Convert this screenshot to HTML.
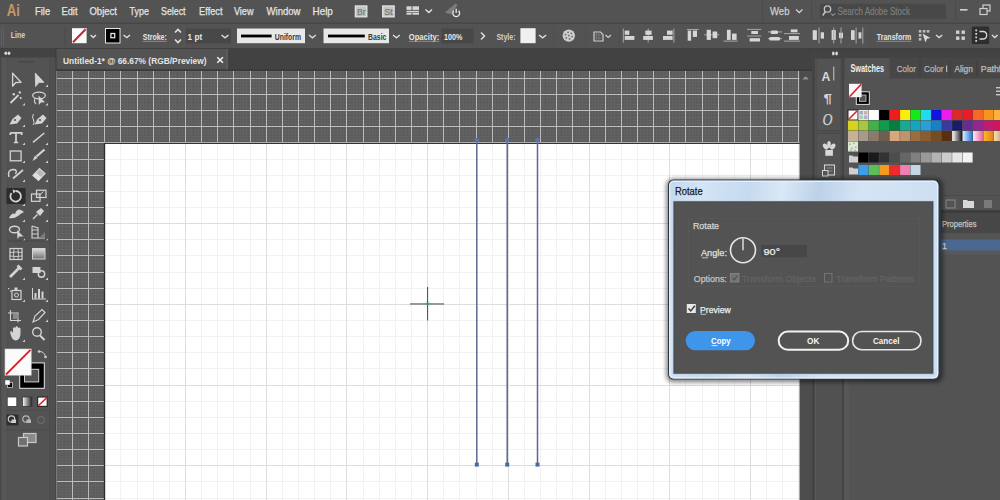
<!DOCTYPE html>
<html><head><meta charset="utf-8"><title>Illustrator</title>
<style>html,body{margin:0;padding:0;width:1000px;height:500px;overflow:hidden;background:#535353;font-family:"Liberation Sans",sans-serif}</style>
</head><body>
<svg width="1000" height="500" viewBox="0 0 1000 500" style="position:absolute;left:0;top:0;display:block" font-family="Liberation Sans, sans-serif"><rect x="0.00" y="0.00" width="1000.00" height="500.00" fill="#535353" />
<rect x="0.00" y="22.50" width="1000.00" height="1.40" fill="#464646" />
<text x="6.80" y="16.00" font-size="16.5" fill="#c4946c" font-weight="bold" textLength="13.20" lengthAdjust="spacingAndGlyphs" >Ai</text>
<text x="35.10" y="15.00" font-size="10.5" fill="#e4e4e4" font-weight="normal" textLength="15.00" lengthAdjust="spacingAndGlyphs" stroke="#e4e4e4" stroke-width="0.25" >File</text>
<text x="61.50" y="15.00" font-size="10.5" fill="#e4e4e4" font-weight="normal" textLength="16.00" lengthAdjust="spacingAndGlyphs" stroke="#e4e4e4" stroke-width="0.25" >Edit</text>
<text x="89.50" y="15.00" font-size="10.5" fill="#e4e4e4" font-weight="normal" textLength="27.40" lengthAdjust="spacingAndGlyphs" stroke="#e4e4e4" stroke-width="0.25" >Object</text>
<text x="129.50" y="15.00" font-size="10.5" fill="#e4e4e4" font-weight="normal" textLength="19.40" lengthAdjust="spacingAndGlyphs" stroke="#e4e4e4" stroke-width="0.25" >Type</text>
<text x="161.10" y="15.00" font-size="10.5" fill="#e4e4e4" font-weight="normal" textLength="24.40" lengthAdjust="spacingAndGlyphs" stroke="#e4e4e4" stroke-width="0.25" >Select</text>
<text x="199.10" y="15.00" font-size="10.5" fill="#e4e4e4" font-weight="normal" textLength="23.40" lengthAdjust="spacingAndGlyphs" stroke="#e4e4e4" stroke-width="0.25" >Effect</text>
<text x="233.90" y="15.00" font-size="10.5" fill="#e4e4e4" font-weight="normal" textLength="19.60" lengthAdjust="spacingAndGlyphs" stroke="#e4e4e4" stroke-width="0.25" >View</text>
<text x="266.50" y="15.00" font-size="10.5" fill="#e4e4e4" font-weight="normal" textLength="34.00" lengthAdjust="spacingAndGlyphs" stroke="#e4e4e4" stroke-width="0.25" >Window</text>
<text x="312.50" y="15.00" font-size="10.5" fill="#e4e4e4" font-weight="normal" textLength="20.40" lengthAdjust="spacingAndGlyphs" stroke="#e4e4e4" stroke-width="0.25" >Help</text>
<rect x="355.40" y="6.00" width="11.40" height="10.80" fill="#c4c4c4" stroke="#dedede" stroke-width="1.4"/>
<text x="357.00" y="14.80" font-size="8.5" fill="#7a7a7a" font-weight="normal" textLength="8.60" lengthAdjust="spacingAndGlyphs" stroke="#7a7a7a" stroke-width="0.25" >Br</text>
<rect x="382.70" y="6.00" width="11.40" height="10.80" fill="#c4c4c4" stroke="#dedede" stroke-width="1.4"/>
<text x="384.30" y="14.80" font-size="8.5" fill="#7a7a7a" font-weight="normal" textLength="8.60" lengthAdjust="spacingAndGlyphs" stroke="#7a7a7a" stroke-width="0.25" >St</text>
<rect x="406.50" y="6.30" width="5.00" height="3.60" fill="#d6d6d6" />
<rect x="412.50" y="6.30" width="6.50" height="3.60" fill="#d6d6d6" />
<rect x="406.50" y="10.80" width="12.50" height="1.60" fill="#d6d6d6" />
<rect x="406.50" y="13.00" width="5.00" height="1.70" fill="#d6d6d6" />
<rect x="412.50" y="13.00" width="6.50" height="1.70" fill="#d6d6d6" />
<path d="M425.5 9.5 L428.8 12.5 L432 9.5" stroke="#e0e0e0" fill="none" stroke-width="1.5" />
<path d="M445 12.5 L455.5 3.5 L457.5 5 L451 14.5 Z" stroke="none" fill="#7c7c7c" stroke-width="1" />
<path d="M453.8 10.8 A3.4 3.4 0 1 0 458.6 10.8" stroke="#e8e8e8" fill="none" stroke-width="1.3" />
<line x1="456.2" y1="8.8" x2="456.2" y2="13" stroke="#e8e8e8" stroke-width="1.3" />
<rect x="762.00" y="2.00" width="1.00" height="19.00" fill="#4a4a4a" />
<rect x="811.00" y="2.00" width="1.00" height="19.00" fill="#4a4a4a" />
<rect x="955.00" y="2.00" width="1.00" height="19.00" fill="#4a4a4a" />
<text x="770.00" y="14.50" font-size="10.5" fill="#cfcfcf" font-weight="normal" textLength="19.50" lengthAdjust="spacingAndGlyphs" stroke="#cfcfcf" stroke-width="0.25" >Web</text>
<path d="M796 9.5 L799.2 12.5 L802.5 9.5" stroke="#d0d0d0" fill="none" stroke-width="1.3" />
<rect x="820.00" y="3.80" width="126.00" height="15.00" fill="#484848" rx="1"/>
<circle cx="827.5" cy="9" r="3.2" stroke="#c4c4c4" stroke-width="1.3" fill="none"/>
<line x1="825.3" y1="11.5" x2="822.8" y2="15.5" stroke="#c4c4c4" stroke-width="1.5" />
<path d="M831 13.5 L833 15.5 L835 13.5" stroke="#c0c0c0" fill="none" stroke-width="1" />
<text x="837.50" y="15.00" font-size="10" fill="#7c7c7c" font-weight="normal" textLength="72.50" lengthAdjust="spacingAndGlyphs" stroke="#7c7c7c" stroke-width="0.25" >Search Adobe Stock</text>
<rect x="960.00" y="9.00" width="7.50" height="1.60" fill="#d0d0d0" />
<rect x="983.00" y="5.00" width="7.00" height="6.00" fill="none" stroke="#cfcfcf" stroke-width="1.2"/>
<rect x="980.00" y="8.50" width="7.00" height="6.00" fill="#535353" stroke="#cfcfcf" stroke-width="1.2"/>
<rect x="0.00" y="48.00" width="1000.00" height="1.00" fill="#404040" />
<rect x="1.00" y="27.00" width="1.00" height="19.00" fill="#5f5f5f" />
<rect x="3.00" y="27.00" width="1.00" height="19.00" fill="#5f5f5f" />
<text x="10.80" y="38.00" font-size="8.6" fill="#d0d0d0" font-weight="bold" textLength="14.40" lengthAdjust="spacingAndGlyphs" >Line</text>
<rect x="64.50" y="27.00" width="1.00" height="19.00" fill="#4a4a4a" />
<rect x="72.00" y="28.20" width="14.60" height="15.00" fill="#fafafa" />
<line x1="73" y1="42.2" x2="85.6" y2="29.2" stroke="#c0283a" stroke-width="2" />
<path d="M90.6 35 L93.3 37.6 L96 35" stroke="#dddddd" fill="none" stroke-width="1.4" />
<rect x="105.50" y="28.50" width="14.50" height="14.50" fill="#000000" stroke="#e6e6e6" stroke-width="1"/>
<rect x="110.90" y="33.50" width="3.80" height="4.20" fill="none" stroke="#e0e0e0" stroke-width="1.3"/>
<path d="M123.5 35 L126.8 37.6 L130 35" stroke="#dddddd" fill="none" stroke-width="1.4" />
<text x="142.80" y="39.50" font-size="8.8" fill="#e6e6e6" font-weight="bold" textLength="24.00" lengthAdjust="spacingAndGlyphs" >Stroke:</text>
<line x1="142.8" y1="41.3" x2="166.8" y2="41.3" stroke="#9a9a9a" stroke-width="0.8" />
<path d="M175 32.5 L178 29.5 L181 32.5" stroke="#e0e0e0" fill="none" stroke-width="1.6" />
<path d="M175 39.5 L178 42.5 L181 39.5" stroke="#e0e0e0" fill="none" stroke-width="1.6" />
<rect x="186.00" y="28.50" width="45.00" height="15.00" fill="#484848" />
<text x="187.60" y="39.50" font-size="8.8" fill="#e6e6e6" font-weight="bold" textLength="14.50" lengthAdjust="spacingAndGlyphs" >1 pt</text>
<path d="M221.5 35 L225 37.8 L228.5 35" stroke="#dddddd" fill="none" stroke-width="1.4" />
<rect x="237.00" y="28.50" width="68.00" height="14.70" fill="#e8e8e8" />
<rect x="241.00" y="34.60" width="30.60" height="2.80" fill="#000000" />
<text x="274.80" y="39.50" font-size="8.8" fill="#3a3a3a" font-weight="bold" textLength="26.20" lengthAdjust="spacingAndGlyphs" >Uniform</text>
<path d="M309 35 L312.4 37.8 L315.8 35" stroke="#dddddd" fill="none" stroke-width="1.4" />
<rect x="323.50" y="28.50" width="65.50" height="14.70" fill="#e8e8e8" />
<rect x="328.00" y="34.60" width="36.80" height="2.80" fill="#000000" />
<text x="368.00" y="39.50" font-size="8.8" fill="#3a3a3a" font-weight="bold" textLength="18.40" lengthAdjust="spacingAndGlyphs" >Basic</text>
<path d="M393 35 L396.4 37.8 L399.8 35" stroke="#dddddd" fill="none" stroke-width="1.4" />
<text x="408.80" y="39.50" font-size="8.8" fill="#e6e6e6" font-weight="bold" textLength="30.40" lengthAdjust="spacingAndGlyphs" >Opacity:</text>
<line x1="408.8" y1="41.3" x2="439.2" y2="41.3" stroke="#9a9a9a" stroke-width="0.8" />
<rect x="441.60" y="28.50" width="32.00" height="15.00" fill="#484848" />
<text x="444.00" y="39.50" font-size="8.8" fill="#e6e6e6" font-weight="bold" textLength="18.40" lengthAdjust="spacingAndGlyphs" >100%</text>
<path d="M481 32.5 L484.5 36 L481 39.5" stroke="#dddddd" fill="none" stroke-width="1.5" />
<text x="496.40" y="39.50" font-size="8.8" fill="#d0d0d0" font-weight="bold" textLength="19.20" lengthAdjust="spacingAndGlyphs" >Style:</text>
<rect x="520.40" y="28.20" width="15.20" height="15.00" fill="#f0f0f0" />
<path d="M539 35 L542.6 37.8 L546.2 35" stroke="#dddddd" fill="none" stroke-width="1.4" />
<rect x="553.00" y="26.00" width="1.00" height="21.00" fill="#4e4e4e" />
<circle cx="568.8" cy="35.6" r="6.2" fill="#cdcdcd"/>
<circle cx="572.05" cy="36.60" r="0.9" fill="#6a6a6a"/>
<circle cx="569.55" cy="38.92" r="0.9" fill="#6a6a6a"/>
<circle cx="566.31" cy="37.91" r="0.9" fill="#6a6a6a"/>
<circle cx="565.55" cy="34.60" r="0.9" fill="#6a6a6a"/>
<circle cx="568.05" cy="32.28" r="0.9" fill="#6a6a6a"/>
<circle cx="571.29" cy="33.29" r="0.9" fill="#6a6a6a"/>
<circle cx="568.8" cy="35.6" r="0.9" fill="#6a6a6a"/>
<rect x="585.00" y="26.00" width="1.00" height="21.00" fill="#4e4e4e" />
<path d="M594 32 H600.5 L603 34.5 V41 H594 Z" stroke="#d0d0d0" fill="none" stroke-width="1.2" />
<path d="M596.5 32 V41 M599 32 V41 M594 35 H603 M594 38 H603" stroke="#8a8a8a" fill="none" stroke-width="0.6" />
<path d="M605.5 35 L608.2 37.5 L611 35" stroke="#d0d0d0" fill="none" stroke-width="1.2" />
<rect x="619.00" y="26.00" width="1.00" height="21.00" fill="#4e4e4e" />
<rect x="622.80" y="28.50" width="1.00" height="14.00" fill="#a8a8a8" />
<rect x="624.70" y="30.60" width="4.60" height="4.20" fill="#d6d6d6" />
<rect x="624.70" y="36.00" width="9.70" height="3.90" fill="#d6d6d6" />
<rect x="647.70" y="28.50" width="1.00" height="14.00" fill="#a8a8a8" />
<rect x="645.30" y="30.60" width="6.30" height="4.20" fill="#d6d6d6" />
<rect x="643.20" y="36.00" width="9.70" height="3.90" fill="#d6d6d6" />
<rect x="673.40" y="28.50" width="1.00" height="14.00" fill="#a8a8a8" />
<rect x="667.00" y="30.60" width="5.60" height="4.20" fill="#d6d6d6" />
<rect x="663.00" y="36.00" width="9.60" height="3.90" fill="#d6d6d6" />
<rect x="687.00" y="29.00" width="11.70" height="1.00" fill="#a8a8a8" />
<rect x="687.70" y="30.60" width="3.40" height="10.10" fill="#d6d6d6" />
<rect x="692.80" y="30.60" width="4.20" height="6.30" fill="#d6d6d6" />
<rect x="704.20" y="34.30" width="15.10" height="1.00" fill="#a8a8a8" />
<rect x="706.70" y="29.80" width="4.20" height="10.10" fill="#d6d6d6" />
<rect x="712.60" y="31.50" width="4.60" height="6.70" fill="#d6d6d6" />
<rect x="723.50" y="40.60" width="14.30" height="1.00" fill="#a8a8a8" />
<rect x="726.90" y="29.80" width="3.80" height="10.10" fill="#d6d6d6" />
<rect x="732.00" y="33.60" width="4.60" height="6.30" fill="#d6d6d6" />
<rect x="747.00" y="28.90" width="14.30" height="1.00" fill="#a8a8a8" />
<rect x="747.00" y="35.50" width="14.30" height="1.00" fill="#a8a8a8" />
<rect x="751.30" y="31.00" width="6.70" height="3.00" fill="#d6d6d6" />
<rect x="749.60" y="38.20" width="10.40" height="3.30" fill="#d6d6d6" />
<rect x="768.00" y="31.40" width="14.00" height="1.00" fill="#a8a8a8" />
<rect x="768.00" y="38.10" width="14.00" height="1.00" fill="#a8a8a8" />
<rect x="770.60" y="30.40" width="7.50" height="3.50" fill="#d6d6d6" rx="1.5"/>
<rect x="769.20" y="37.00" width="10.90" height="3.50" fill="#d6d6d6" rx="1.5"/>
<rect x="790.80" y="29.40" width="6.70" height="2.90" fill="#d6d6d6" />
<rect x="784.00" y="33.10" width="16.00" height="1.00" fill="#a8a8a8" />
<rect x="789.00" y="36.00" width="9.80" height="3.90" fill="#d6d6d6" />
<rect x="784.00" y="40.60" width="16.00" height="1.00" fill="#a8a8a8" />
<rect x="812.70" y="30.20" width="4.20" height="9.70" fill="#d6d6d6" />
<rect x="818.50" y="27.50" width="1.00" height="16.00" fill="#a8a8a8" />
<rect x="820.70" y="32.30" width="3.30" height="6.30" fill="#d6d6d6" />
<rect x="831.60" y="30.00" width="4.20" height="9.90" fill="#d6d6d6" />
<rect x="833.20" y="27.50" width="1.00" height="16.00" fill="#a8a8a8" />
<rect x="839.00" y="32.70" width="4.00" height="5.50" fill="#d6d6d6" />
<rect x="840.50" y="27.50" width="1.00" height="16.00" fill="#a8a8a8" />
<rect x="851.00" y="30.20" width="3.70" height="9.70" fill="#d6d6d6" />
<rect x="855.60" y="27.50" width="1.00" height="16.00" fill="#a8a8a8" />
<rect x="858.50" y="32.30" width="2.90" height="6.30" fill="#d6d6d6" />
<rect x="862.30" y="27.50" width="1.00" height="16.00" fill="#a8a8a8" />
<rect x="870.00" y="26.00" width="1.00" height="21.00" fill="#4e4e4e" />
<text x="876.80" y="39.50" font-size="8.8" fill="#e6e6e6" font-weight="bold" textLength="34.40" lengthAdjust="spacingAndGlyphs" >Transform</text>
<line x1="876.8" y1="41.3" x2="911.2" y2="41.3" stroke="#9a9a9a" stroke-width="0.8" />
<rect x="918.80" y="30.00" width="2.60" height="2.60" fill="#bdbdbd" />
<rect x="918.80" y="34.00" width="2.60" height="2.60" fill="#bdbdbd" />
<rect x="918.80" y="38.00" width="2.60" height="2.60" fill="#bdbdbd" />
<rect x="922.80" y="30.00" width="2.60" height="2.60" fill="#bdbdbd" />
<rect x="926.80" y="30.00" width="2.60" height="2.60" fill="#bdbdbd" />
<path d="M922.5 33.5 L930.5 38 L927 38.8 L925.5 42.5 Z" stroke="none" fill="#d8d8d8" stroke-width="1" />
<path d="M936 35 L939.1 37.6 L942.2 35" stroke="#dddddd" fill="none" stroke-width="1.3" />
<rect x="956.00" y="30.50" width="3.40" height="3.40" fill="#cfcfcf" />
<rect x="961.50" y="30.50" width="3.40" height="3.40" fill="#cfcfcf" />
<rect x="956.00" y="36.50" width="3.40" height="3.40" fill="#cfcfcf" />
<rect x="961.50" y="36.50" width="3.40" height="3.40" fill="#cfcfcf" />
<rect x="971.80" y="26.60" width="17.40" height="17.40" fill="#2e2e2e" rx="1.5"/>
<rect x="975.30" y="29.50" width="1.80" height="1.80" fill="#cfcfcf" />
<rect x="975.30" y="33.00" width="1.80" height="1.80" fill="#cfcfcf" />
<rect x="975.30" y="36.50" width="1.80" height="1.80" fill="#cfcfcf" />
<rect x="975.30" y="40.00" width="1.80" height="1.80" fill="#cfcfcf" />
<path d="M979.5 31.5 H983.5 A3.8 3.8 0 0 1 983.5 39 H979.5" stroke="#d8d8d8" fill="none" stroke-width="1.3" />
<path d="M992 35 L994.8 37.6 L997.6 35" stroke="#dddddd" fill="none" stroke-width="1.3" />
<rect x="56.00" y="49.00" width="756.00" height="22.00" fill="#424242" />
<rect x="56.00" y="49.00" width="172.00" height="20.50" fill="#535353" />
<rect x="226.00" y="49.00" width="2.00" height="20.50" fill="#5a5a5a" />
<text x="63.00" y="63.60" font-size="9.3" fill="#e4e4e4" font-weight="bold" textLength="143.50" lengthAdjust="spacingAndGlyphs" >Untitled-1* @ 66.67% (RGB/Preview)</text>
<path d="M217.3 57.2 L223 62.8 M223 57.2 L217.3 62.8" stroke="#f0f0f0" fill="none" stroke-width="1.6" />
<rect x="56.00" y="71.00" width="744.00" height="429.00" fill="#5c5c5c" />
<path d="M59.50 71V500M62.50 71V500M66.50 71V500M69.50 71V500M75.50 71V500M78.50 71V500M82.50 71V500M85.50 71V500M91.50 71V500M95.50 71V500M98.50 71V500M101.50 71V500M108.50 71V500M111.50 71V500M114.50 71V500M117.50 71V500M124.50 71V500M127.50 71V500M130.50 71V500M133.50 71V500M140.50 71V500M143.50 71V500M146.50 71V500M150.50 71V500M156.50 71V500M159.50 71V500M162.50 71V500M166.50 71V500M172.50 71V500M175.50 71V500M179.50 71V500M182.50 71V500M188.50 71V500M191.50 71V500M195.50 71V500M198.50 71V500M204.50 71V500M208.50 71V500M211.50 71V500M214.50 71V500M221.50 71V500M224.50 71V500M227.50 71V500M230.50 71V500M237.50 71V500M240.50 71V500M243.50 71V500M246.50 71V500M253.50 71V500M256.50 71V500M259.50 71V500M262.50 71V500M269.50 71V500M272.50 71V500M275.50 71V500M279.50 71V500M285.50 71V500M288.50 71V500M292.50 71V500M295.50 71V500M301.50 71V500M304.50 71V500M308.50 71V500M311.50 71V500M317.50 71V500M321.50 71V500M324.50 71V500M327.50 71V500M334.50 71V500M337.50 71V500M340.50 71V500M343.50 71V500M350.50 71V500M353.50 71V500M356.50 71V500M359.50 71V500M366.50 71V500M369.50 71V500M372.50 71V500M375.50 71V500M382.50 71V500M385.50 71V500M388.50 71V500M392.50 71V500M398.50 71V500M401.50 71V500M405.50 71V500M408.50 71V500M414.50 71V500M417.50 71V500M421.50 71V500M424.50 71V500M430.50 71V500M434.50 71V500M437.50 71V500M440.50 71V500M446.50 71V500M450.50 71V500M453.50 71V500M456.50 71V500M463.50 71V500M466.50 71V500M469.50 71V500M472.50 71V500M479.50 71V500M482.50 71V500M485.50 71V500M488.50 71V500M495.50 71V500M498.50 71V500M501.50 71V500M505.50 71V500M511.50 71V500M514.50 71V500M518.50 71V500M521.50 71V500M527.50 71V500M530.50 71V500M534.50 71V500M537.50 71V500M543.50 71V500M547.50 71V500M550.50 71V500M553.50 71V500M559.50 71V500M563.50 71V500M566.50 71V500M569.50 71V500M576.50 71V500M579.50 71V500M582.50 71V500M585.50 71V500M592.50 71V500M595.50 71V500M598.50 71V500M601.50 71V500M608.50 71V500M611.50 71V500M614.50 71V500M618.50 71V500M624.50 71V500M627.50 71V500M630.50 71V500M634.50 71V500M640.50 71V500M643.50 71V500M647.50 71V500M650.50 71V500M656.50 71V500M660.50 71V500M663.50 71V500M666.50 71V500M672.50 71V500M676.50 71V500M679.50 71V500M682.50 71V500M689.50 71V500M692.50 71V500M695.50 71V500M698.50 71V500M705.50 71V500M708.50 71V500M711.50 71V500M714.50 71V500M721.50 71V500M724.50 71V500M727.50 71V500M731.50 71V500M737.50 71V500M740.50 71V500M743.50 71V500M747.50 71V500M753.50 71V500M756.50 71V500M760.50 71V500M763.50 71V500M769.50 71V500M773.50 71V500M776.50 71V500M779.50 71V500M785.50 71V500M789.50 71V500M792.50 71V500M795.50 71V500M56 71.50H800M56 75.50H800M56 81.50H800M56 84.50H800M56 88.50H800M56 91.50H800M56 97.50H800M56 100.50H800M56 104.50H800M56 107.50H800M56 113.50H800M56 117.50H800M56 120.50H800M56 123.50H800M56 130.50H800M56 133.50H800M56 136.50H800M56 139.50H800M56 146.50H800M56 149.50H800M56 152.50H800M56 155.50H800M56 162.50H800M56 165.50H800M56 168.50H800M56 172.50H800M56 178.50H800M56 181.50H800M56 184.50H800M56 188.50H800M56 194.50H800M56 197.50H800M56 201.50H800M56 204.50H800M56 210.50H800M56 213.50H800M56 217.50H800M56 220.50H800M56 226.50H800M56 230.50H800M56 233.50H800M56 236.50H800M56 243.50H800M56 246.50H800M56 249.50H800M56 252.50H800M56 259.50H800M56 262.50H800M56 265.50H800M56 268.50H800M56 275.50H800M56 278.50H800M56 281.50H800M56 284.50H800M56 291.50H800M56 294.50H800M56 297.50H800M56 301.50H800M56 307.50H800M56 310.50H800M56 314.50H800M56 317.50H800M56 323.50H800M56 326.50H800M56 330.50H800M56 333.50H800M56 339.50H800M56 343.50H800M56 346.50H800M56 349.50H800M56 356.50H800M56 359.50H800M56 362.50H800M56 365.50H800M56 372.50H800M56 375.50H800M56 378.50H800M56 381.50H800M56 388.50H800M56 391.50H800M56 394.50H800M56 397.50H800M56 404.50H800M56 407.50H800M56 410.50H800M56 414.50H800M56 420.50H800M56 423.50H800M56 427.50H800M56 430.50H800M56 436.50H800M56 439.50H800M56 443.50H800M56 446.50H800M56 452.50H800M56 456.50H800M56 459.50H800M56 462.50H800M56 468.50H800M56 472.50H800M56 475.50H800M56 478.50H800M56 485.50H800M56 488.50H800M56 491.50H800M56 494.50H800" stroke="#626262" fill="none" stroke-width="1" />
<path d="M56.50 71V500M72.50 71V500M88.50 71V500M104.50 71V500M120.50 71V500M137.50 71V500M153.50 71V500M169.50 71V500M185.50 71V500M201.50 71V500M217.50 71V500M233.50 71V500M250.50 71V500M266.50 71V500M282.50 71V500M298.50 71V500M314.50 71V500M330.50 71V500M346.50 71V500M363.50 71V500M379.50 71V500M395.50 71V500M411.50 71V500M427.50 71V500M443.50 71V500M459.50 71V500M476.50 71V500M492.50 71V500M508.50 71V500M524.50 71V500M540.50 71V500M556.50 71V500M572.50 71V500M589.50 71V500M605.50 71V500M621.50 71V500M637.50 71V500M653.50 71V500M669.50 71V500M685.50 71V500M702.50 71V500M718.50 71V500M734.50 71V500M750.50 71V500M766.50 71V500M782.50 71V500M798.50 71V500M56 78.50H800M56 94.50H800M56 110.50H800M56 126.50H800M56 142.50H800M56 159.50H800M56 175.50H800M56 191.50H800M56 207.50H800M56 223.50H800M56 239.50H800M56 255.50H800M56 272.50H800M56 288.50H800M56 304.50H800M56 320.50H800M56 336.50H800M56 352.50H800M56 368.50H800M56 385.50H800M56 401.50H800M56 417.50H800M56 433.50H800M56 449.50H800M56 465.50H800M56 481.50H800M56 498.50H800" stroke="#bcbcbc" fill="none" stroke-width="1" />
<rect x="104.80" y="143.40" width="695.20" height="356.60" fill="#ffffff" />
<path d="M120.50 143.4V500M137.50 143.4V500M153.50 143.4V500M169.50 143.4V500M201.50 143.4V500M217.50 143.4V500M233.50 143.4V500M250.50 143.4V500M282.50 143.4V500M298.50 143.4V500M314.50 143.4V500M330.50 143.4V500M363.50 143.4V500M379.50 143.4V500M395.50 143.4V500M411.50 143.4V500M443.50 143.4V500M459.50 143.4V500M476.50 143.4V500M492.50 143.4V500M524.50 143.4V500M540.50 143.4V500M556.50 143.4V500M572.50 143.4V500M605.50 143.4V500M621.50 143.4V500M637.50 143.4V500M653.50 143.4V500M685.50 143.4V500M702.50 143.4V500M718.50 143.4V500M734.50 143.4V500M766.50 143.4V500M782.50 143.4V500M798.50 143.4V500M104.8 159.50H800M104.8 175.50H800M104.8 191.50H800M104.8 207.50H800M104.8 239.50H800M104.8 255.50H800M104.8 272.50H800M104.8 288.50H800M104.8 320.50H800M104.8 336.50H800M104.8 352.50H800M104.8 368.50H800M104.8 401.50H800M104.8 417.50H800M104.8 433.50H800M104.8 449.50H800M104.8 481.50H800M104.8 498.50H800" stroke="#f2f2f2" fill="none" stroke-width="1" />
<path d="M185.50 143.4V500M266.50 143.4V500M346.50 143.4V500M427.50 143.4V500M508.50 143.4V500M589.50 143.4V500M669.50 143.4V500M750.50 143.4V500M104.8 223.50H800M104.8 304.50H800M104.8 385.50H800M104.8 465.50H800" stroke="#dddddd" fill="none" stroke-width="1" />
<rect x="103.90" y="142.90" width="1.30" height="357.10" fill="#2e2e2e" />
<rect x="103.90" y="142.90" width="696.10" height="1.10" fill="#343434" />
<rect x="56.00" y="69.60" width="756.00" height="1.40" fill="#393939" />
<rect x="799.50" y="71.00" width="12.50" height="429.00" fill="#4d4d4d" />
<path d="M802.6 79.6 Q805.6 73.2 808.6 79.6 Z" stroke="none" fill="#8e8e8e" stroke-width="1" />
<rect x="476.05" y="140.00" width="1.50" height="324.60" fill="#5d6890" />
<rect x="474.80" y="138.00" width="4.00" height="4.00" fill="#5a72b0" />
<rect x="474.80" y="462.60" width="4.00" height="4.00" fill="#4a6aa0" />
<rect x="506.45" y="140.00" width="1.50" height="324.60" fill="#5d6890" />
<rect x="505.20" y="138.00" width="4.00" height="4.00" fill="#5a72b0" />
<rect x="505.20" y="462.60" width="4.00" height="4.00" fill="#4a6aa0" />
<rect x="536.75" y="140.00" width="1.50" height="324.60" fill="#5d6890" />
<rect x="535.50" y="138.00" width="4.00" height="4.00" fill="#5a72b0" />
<rect x="535.50" y="462.60" width="4.00" height="4.00" fill="#4a6aa0" />
<defs><filter id="sh2" x="-200%" y="-200%" width="500%" height="500%"><feGaussianBlur stdDeviation="1"/></filter></defs>
<rect x="426.00" y="302.00" width="3.00" height="3.00" fill="#7fd8d4" filter="url(#sh2)"/>
<rect x="410.00" y="303.40" width="34.00" height="1.10" fill="#555555" />
<rect x="427.00" y="287.00" width="1.10" height="33.50" fill="#555555" />
<rect x="426.60" y="303.20" width="2.00" height="1.80" fill="#2aa8a0" />
<rect x="0.00" y="48.50" width="56.00" height="9.00" fill="#434343" />
<ellipse cx="5.8" cy="53.3" rx="1.4" ry="1.8" fill="#d8d8d8"/><ellipse cx="9" cy="53.3" rx="1.4" ry="1.8" fill="#d8d8d8"/>
<rect x="0.00" y="57.50" width="1.50" height="442.50" fill="#484848" />
<rect x="1.50" y="57.50" width="5.80" height="442.50" fill="#565656" />
<rect x="7.30" y="57.50" width="0.80" height="442.50" fill="#4e4e4e" />
<rect x="49.00" y="57.50" width="1.00" height="442.50" fill="#4e4e4e" />
<rect x="50.00" y="57.50" width="5.50" height="442.50" fill="#4f4f4f" />
<rect x="55.50" y="49.00" width="1.00" height="451.00" fill="#3a3a3a" />
<rect x="18.00" y="61.00" width="16.00" height="1.50" fill="#484848" />
<path d="M12.6 73.2 L12.6 86.2 L15.8 82.5 L21 82.3 Z" stroke="#d4d4d4" fill="none" stroke-width="1.3" stroke-linejoin="round"/>
<path d="M35.3 73 L35.6 86.5 L38.8 82.6 L44 82.3 Z" stroke="#d4d4d4" fill="#d4d4d4" stroke-width="0.8" />
<path d="M48 87 L48 84.4 L45.4 87 Z" stroke="none" fill="#cfcfcf" stroke-width="1" />
<line x1="10.5" y1="103" x2="18.5" y2="95" stroke="#d4d4d4" stroke-width="1.8" />
<circle cx="13.8" cy="94.3" r="1.2" fill="#d4d4d4"/><circle cx="19.8" cy="92.4" r="1.2" fill="#d4d4d4"/><circle cx="20.7" cy="98" r="1" fill="#d4d4d4"/>
<ellipse cx="39" cy="95.5" rx="6.3" ry="3.3" stroke="#d4d4d4" stroke-width="1.3" fill="none"/>
<path d="M35.5 98 Q33 101 36 104" stroke="#d4d4d4" fill="none" stroke-width="1.1" />
<path d="M38.5 95.5 L38.8 105 L41 102.5 L45 102.3 Z" stroke="none" fill="#d4d4d4" stroke-width="1" />
<path d="M25 105.5 L25 102.9 L22.4 105.5 Z" stroke="none" fill="#cfcfcf" stroke-width="1" />
<path d="M48 105.5 L48 102.9 L45.4 105.5 Z" stroke="none" fill="#cfcfcf" stroke-width="1" />
<path d="M9.5 124.5 L12.5 119 L18 114.5 L21.5 118 L17 123.5 Z" stroke="none" fill="#d4d4d4" stroke-width="1" />
<circle cx="15" cy="120" r="1.1" fill="#535353"/>
<path d="M34.5 124.5 L37.5 119 L43 114.5 L46.5 118 L42 123.5 Z" stroke="none" fill="#d4d4d4" stroke-width="1" />
<circle cx="40" cy="120" r="1.1" fill="#535353"/>
<path d="M33.5 114 Q31.5 117 33.5 120 Q35 123 33 125" stroke="#d4d4d4" fill="none" stroke-width="1" />
<path d="M25 127 L25 124.4 L22.4 127 Z" stroke="none" fill="#cfcfcf" stroke-width="1" />
<path d="M48 127 L48 124.4 L45.4 127 Z" stroke="none" fill="#cfcfcf" stroke-width="1" />
<path d="M10.3 132.8 H21.7 V135 M10.3 132.8 V135 M16 132.8 V142.5 M13.8 142.5 H18.2" stroke="#d4d4d4" fill="none" stroke-width="1.7" />
<line x1="33" y1="142.3" x2="44.3" y2="133" stroke="#d4d4d4" stroke-width="1.6" />
<path d="M25 145 L25 142.4 L22.4 145 Z" stroke="none" fill="#cfcfcf" stroke-width="1" />
<path d="M48 145 L48 142.4 L45.4 145 Z" stroke="none" fill="#cfcfcf" stroke-width="1" />
<rect x="10.30" y="151.00" width="10.80" height="9.80" fill="#5a5a5a" stroke="#d4d4d4" stroke-width="1.3"/>
<path d="M32.5 161 L35 155.5 L37.5 158 Z" stroke="none" fill="#d4d4d4" stroke-width="1" />
<line x1="36.5" y1="156.5" x2="44.5" y2="149.5" stroke="#d4d4d4" stroke-width="2.2" />
<path d="M25 163 L25 160.4 L22.4 163 Z" stroke="none" fill="#cfcfcf" stroke-width="1" />
<path d="M48 163 L48 160.4 L45.4 163 Z" stroke="none" fill="#cfcfcf" stroke-width="1" />
<path d="M9 177 Q7 170 13 169.5 Q18 169.5 15.5 174" stroke="#d4d4d4" fill="none" stroke-width="1.4" />
<line x1="13" y1="178.5" x2="23" y2="170" stroke="#d4d4d4" stroke-width="1.7" />
<path d="M33 175.5 L39.5 168.5 L45 173.5 L38.5 180.5 Z" stroke="#d4d4d4" fill="#b8b8b8" stroke-width="1.2" />
<path d="M33 175.5 L36 172.5 L41.5 177.5 L38.5 180.5 Z" stroke="none" fill="#e0e0e0" stroke-width="1" />
<path d="M25 182 L25 179.4 L22.4 182 Z" stroke="none" fill="#cfcfcf" stroke-width="1" />
<path d="M48 182 L48 179.4 L45.4 182 Z" stroke="none" fill="#cfcfcf" stroke-width="1" />
<rect x="6.40" y="188.00" width="19.20" height="16.00" fill="#2c2c2c" rx="1"/>
<path d="M11.5 193 A5.3 5.3 0 1 0 16 191" stroke="#d4d4d4" fill="none" stroke-width="1.8" />
<path d="M12.5 189.5 L16.5 190.8 L13.5 193.5 Z" stroke="none" fill="#d4d4d4" stroke-width="1" />
<rect x="31.50" y="194.00" width="8.50" height="7.30" fill="none" stroke="#d4d4d4" stroke-width="1.2"/>
<rect x="36.50" y="190.20" width="9.50" height="7.30" fill="none" stroke="#d4d4d4" stroke-width="1.2"/>
<line x1="38.5" y1="196" x2="43.5" y2="191.5" stroke="#d4d4d4" stroke-width="1" />
<path d="M25 206 L25 203.4 L22.4 206 Z" stroke="none" fill="#cfcfcf" stroke-width="1" />
<path d="M48 206 L48 203.4 L45.4 206 Z" stroke="none" fill="#cfcfcf" stroke-width="1" />
<path d="M9 218 Q12 212 15 214 Q17 208 21 210 L24 212 Q20 214 18 216 Q14 219 9 218 Z" stroke="none" fill="#d4d4d4" stroke-width="1" />
<path d="M33 219 L37.5 214.5" stroke="#d4d4d4" fill="none" stroke-width="1.5" />
<path d="M36 212 L41 208 L44 211 L40 216 Z" stroke="none" fill="#d4d4d4" stroke-width="1" />
<path d="M25 222 L25 219.4 L22.4 222 Z" stroke="none" fill="#cfcfcf" stroke-width="1" />
<path d="M48 222 L48 219.4 L45.4 222 Z" stroke="none" fill="#cfcfcf" stroke-width="1" />
<ellipse cx="14.5" cy="229.5" rx="5" ry="3.3" stroke="#d4d4d4" stroke-width="1.4" fill="none"/>
<path d="M17 230 L17.5 239 L19.5 236.5 L23.5 236.5 Z" stroke="none" fill="#d4d4d4" stroke-width="1" />
<path d="M32 226 V238 H45 M32 226 L38 228 V238 M32 230 H38 M32 234 H38" stroke="#d4d4d4" fill="none" stroke-width="1.1" />
<path d="M39 238 L45 232 V238 Z" stroke="none" fill="#7a7a7a" stroke-width="1" />
<path d="M25 241 L25 238.4 L22.4 241 Z" stroke="none" fill="#cfcfcf" stroke-width="1" />
<path d="M48 241 L48 238.4 L45.4 241 Z" stroke="none" fill="#cfcfcf" stroke-width="1" />
<rect x="8.00" y="240.30" width="42.00" height="1.30" fill="#4a4a4a" />
<rect x="10.00" y="248.50" width="12.00" height="11.00" fill="none" stroke="#d4d4d4" stroke-width="1.2"/>
<path d="M14 248.5 Q13 254 14 259.5 M18 248.5 Q19 254 18 259.5 M10 252.5 Q16 251.5 22 252.5 M10 256 Q16 257 22 256" stroke="#d4d4d4" fill="none" stroke-width="0.9" />
<defs><linearGradient id="tg" x1="0" x2="0" y1="0" y2="1"><stop offset="0" stop-color="#e0e0e0"/><stop offset="1" stop-color="#707070"/></linearGradient><linearGradient id="tgh" x1="0" x2="1" y1="0" y2="0"><stop offset="0" stop-color="#ffffff"/><stop offset="1" stop-color="#222222"/></linearGradient></defs>
<rect x="32.50" y="248.50" width="12.50" height="10.50" fill="url(#tg)" stroke="#d4d4d4" stroke-width="1"/>
<line x1="10" y1="277" x2="19" y2="268" stroke="#d4d4d4" stroke-width="2.6" />
<path d="M17.5 265.5 L21.5 269.5" stroke="#d4d4d4" fill="none" stroke-width="2.6" />
<rect x="32.50" y="267.00" width="8.00" height="6.00" fill="#d4d4d4" />
<circle cx="41.5" cy="274" r="3.2" stroke="#d4d4d4" stroke-width="1.4" fill="none"/>
<path d="M25 280 L25 277.4 L22.4 280 Z" stroke="none" fill="#cfcfcf" stroke-width="1" />
<path d="M48 280 L48 277.4 L45.4 280 Z" stroke="none" fill="#cfcfcf" stroke-width="1" />
<rect x="12.00" y="290.50" width="9.00" height="9.00" fill="none" stroke="#d4d4d4" stroke-width="1.2"/>
<circle cx="16.5" cy="295" r="2" stroke="#d4d4d4" stroke-width="1" fill="none"/>
<rect x="14.50" y="287.50" width="3.00" height="3.00" fill="#d4d4d4" />
<rect x="8.00" y="288.00" width="1.20" height="1.20" fill="#d4d4d4" />
<rect x="10.00" y="290.50" width="1.20" height="1.20" fill="#d4d4d4" />
<rect x="32.00" y="288.00" width="1.00" height="11.00" fill="#d4d4d4" />
<rect x="32.00" y="298.50" width="14.00" height="1.00" fill="#d4d4d4" />
<rect x="34.50" y="293.00" width="2.00" height="5.50" fill="#d4d4d4" />
<rect x="38.00" y="289.00" width="2.00" height="9.50" fill="#d4d4d4" />
<rect x="41.50" y="291.50" width="2.00" height="7.00" fill="#d4d4d4" />
<path d="M25 302 L25 299.4 L22.4 302 Z" stroke="none" fill="#cfcfcf" stroke-width="1" />
<path d="M48 302 L48 299.4 L45.4 302 Z" stroke="none" fill="#cfcfcf" stroke-width="1" />
<path d="M10.5 310 V320.5 H21 M8 313 H18 V322.5" stroke="#d4d4d4" fill="none" stroke-width="1.1" />
<rect x="13.00" y="314.00" width="6.00" height="5.00" fill="#8a8a8a" />
<path d="M33 322 L35 316 L42 309.5 L45 312.5 L38.5 319.5 Z" stroke="#d4d4d4" fill="none" stroke-width="1.2" />
<path d="M48 322 L48 319.4 L45.4 322 Z" stroke="none" fill="#cfcfcf" stroke-width="1" />
<path d="M10.5 334 Q9.5 331 11.5 331 L13 333 V328 Q14.5 326.5 15.5 328 V327 Q17 325.5 18 327 V328 Q19.5 327 20.5 328.5 V334 Q20 340 15.5 340.5 Q12 340 10.5 334 Z" stroke="none" fill="#d4d4d4" stroke-width="1" />
<circle cx="37" cy="332" r="4.3" stroke="#d4d4d4" stroke-width="1.4" fill="none"/>
<line x1="40" y1="335.5" x2="44.5" y2="340" stroke="#d4d4d4" stroke-width="2" />
<path d="M25 342 L25 339.4 L22.4 342 Z" stroke="none" fill="#cfcfcf" stroke-width="1" />
<rect x="19.70" y="362.90" width="24.60" height="25.40" fill="#000000" stroke="#e8e8e8" stroke-width="1"/>
<rect x="24.50" y="369.30" width="14.20" height="12.60" fill="#535353" stroke="#cfcfcf" stroke-width="1"/>
<rect x="5.00" y="349.00" width="26.20" height="26.20" fill="#fbfbfb" stroke="#cfcfcf" stroke-width="0.6"/>
<line x1="6" y1="374.5" x2="30.5" y2="349.8" stroke="#d8202a" stroke-width="1.8" />
<path d="M38.5 351.5 Q44 351 45.5 356.5" stroke="#cfcfcf" fill="none" stroke-width="1" />
<circle cx="39" cy="351.5" r="1.3" fill="#cfcfcf"/><circle cx="45.5" cy="357" r="1.3" fill="#cfcfcf"/>
<rect x="7.50" y="382.50" width="5.00" height="5.00" fill="#000000" stroke="#cfcfcf" stroke-width="0.8"/>
<rect x="5.00" y="380.00" width="5.00" height="5.00" fill="#ffffff" stroke="#555" stroke-width="0.5"/>
<rect x="7.20" y="397.00" width="9.60" height="9.40" fill="#ffffff" stroke="#3a3a3a" stroke-width="0.8"/>
<rect x="22.40" y="397.00" width="9.60" height="9.40" fill="url(#tgh)" stroke="#3a3a3a" stroke-width="0.8"/>
<rect x="37.60" y="397.00" width="9.60" height="9.40" fill="#ffffff" stroke="#2a2a2a" stroke-width="1.2"/>
<line x1="38" y1="406" x2="47" y2="397.5" stroke="#d8202a" stroke-width="1.6" />
<rect x="5.00" y="410.00" width="46.00" height="1.00" fill="#4c4c4c" />
<rect x="6.40" y="414.40" width="12.00" height="11.20" fill="#2e2e2e" rx="1"/>
<circle cx="11.5" cy="419" r="3.2" stroke="#d0d0d0" stroke-width="1.2" fill="none"/>
<rect x="11.50" y="419.50" width="4.50" height="3.50" fill="#d0d0d0" />
<circle cx="26" cy="419" r="3.2" stroke="#b8b8b8" stroke-width="1.2" fill="none"/>
<rect x="26.50" y="419.50" width="4.50" height="3.50" fill="#b8b8b8" />
<circle cx="41" cy="420" r="3.3" stroke="#6a6a6a" stroke-width="1.2" fill="none"/>
<rect x="5.00" y="429.50" width="46.00" height="1.00" fill="#4c4c4c" />
<rect x="23.50" y="433.50" width="12.50" height="9.00" fill="#8a8a8a" stroke="#c8c8c8" stroke-width="1.2"/>
<rect x="18.50" y="437.50" width="9.00" height="8.50" fill="#707070" stroke="#c8c8c8" stroke-width="1.2"/>
<rect x="812.00" y="49.00" width="188.00" height="9.00" fill="#434343" />
<ellipse cx="833.3" cy="53.4" rx="1.3" ry="2" fill="#d8d8d8"/><ellipse cx="836.6" cy="53.4" rx="1.3" ry="2" fill="#d8d8d8"/>
<rect x="812.00" y="58.00" width="3.00" height="442.00" fill="#444444" />
<rect x="815.00" y="58.00" width="27.00" height="442.00" fill="#515151" />
<rect x="815.00" y="58.00" width="1.00" height="442.00" fill="#5a5a5a" />
<rect x="816.00" y="58.50" width="25.00" height="72.00" fill="#535353" stroke="#484848" stroke-width="1"/>
<rect x="816.00" y="133.00" width="25.00" height="46.00" fill="#535353" stroke="#484848" stroke-width="1"/>
<rect x="842.00" y="58.00" width="2.00" height="442.00" fill="#444444" />
<rect x="844.00" y="254.00" width="5.50" height="246.00" fill="#575757" />
<text x="821.50" y="80.50" font-size="12" fill="#d8d8d8" font-weight="bold" textLength="8.80" lengthAdjust="spacingAndGlyphs" >A</text>
<rect x="833.20" y="66.50" width="1.10" height="14.00" fill="#bdbdbd" />
<text x="823.50" y="103.00" font-size="12" fill="#d4d4d4" font-weight="bold" textLength="8.50" lengthAdjust="spacingAndGlyphs" >¶</text>
<text x="822.50" y="124.50" font-size="16" fill="#d0d0d0" font-weight="normal" textLength="10.00" lengthAdjust="spacingAndGlyphs" stroke="#d0d0d0" stroke-width="0.25" font-style="italic" font-family="Liberation Serif">O</text>
<ellipse cx="825.5" cy="146.5" rx="2.2" ry="3.3" transform="rotate(-35 825.5 146.5)" fill="#d8d8d8"/>
<ellipse cx="829" cy="144.5" rx="1.8" ry="3.5" fill="#d8d8d8"/>
<ellipse cx="832.8" cy="146.5" rx="2.2" ry="3.3" transform="rotate(35 832.8 146.5)" fill="#d8d8d8"/>
<rect x="825.30" y="150.00" width="7.60" height="5.80" fill="#d8d8d8" />
<rect x="824.50" y="165.00" width="10.00" height="10.00" fill="none" stroke="#d4d4d4" stroke-width="1.1"/>
<path d="M826.5 168 H832.5 M826.5 171 H832.5" stroke="#a0a0a0" fill="none" stroke-width="0.8" />
<rect x="822.50" y="170.50" width="5.50" height="5.50" fill="#535353" stroke="#d4d4d4" stroke-width="1"/>
<rect x="844.50" y="58.00" width="155.50" height="20.50" fill="#474747" />
<rect x="844.80" y="58.00" width="44.80" height="20.50" fill="#535353" />
<text x="850.40" y="72.00" font-size="10" fill="#f0f0f0" font-weight="bold" textLength="33.60" lengthAdjust="spacingAndGlyphs" >Swatches</text>
<text x="896.80" y="72.00" font-size="9.5" fill="#b4b4b4" font-weight="normal" textLength="19.20" lengthAdjust="spacingAndGlyphs" stroke="#b4b4b4" stroke-width="0.25" >Color</text>
<rect x="919.50" y="60.00" width="1.00" height="17.00" fill="#3f3f3f" />
<text x="924.00" y="72.00" font-size="9.5" fill="#b4b4b4" font-weight="normal" textLength="19.50" lengthAdjust="spacingAndGlyphs" stroke="#b4b4b4" stroke-width="0.25" >Color</text>
<rect x="946.00" y="65.50" width="1.20" height="6.50" fill="#b4b4b4" />
<rect x="949.50" y="60.00" width="1.00" height="17.00" fill="#3f3f3f" />
<text x="954.40" y="72.00" font-size="9.5" fill="#c0c0c0" font-weight="normal" textLength="18.40" lengthAdjust="spacingAndGlyphs" stroke="#c0c0c0" stroke-width="0.25" >Align</text>
<rect x="976.50" y="60.00" width="1.00" height="17.00" fill="#3f3f3f" />
<text x="980.80" y="72.00" font-size="9.5" fill="#c0c0c0" font-weight="normal" textLength="40.00" lengthAdjust="spacingAndGlyphs" stroke="#c0c0c0" stroke-width="0.25" >Pathfinder</text>
<rect x="856.30" y="91.80" width="13.00" height="12.60" fill="#000000" stroke="#e0e0e0" stroke-width="1"/>
<rect x="859.50" y="95.00" width="6.50" height="6.30" fill="#535353" stroke="#cfcfcf" stroke-width="0.8"/>
<rect x="849.00" y="83.80" width="12.60" height="13.40" fill="#f6f6f6" />
<line x1="849.5" y1="96.7" x2="861.2" y2="84.3" stroke="#d8202a" stroke-width="1.6" />
<rect x="996.00" y="87.00" width="4.00" height="1.40" fill="#c8c8c8" />
<rect x="996.00" y="90.50" width="4.00" height="1.40" fill="#c8c8c8" />
<rect x="996.00" y="94.00" width="4.00" height="1.40" fill="#c8c8c8" />
<defs><linearGradient id="g_gray" x1="0" x2="1"><stop offset="0" stop-color="#ffffff"/><stop offset="1" stop-color="#111111"/></linearGradient><linearGradient id="g_blue" x1="0" x2="1"><stop offset="0" stop-color="#d8f0ff"/><stop offset="1" stop-color="#1d6fd0"/></linearGradient><linearGradient id="g_pink" x1="0" x2="1"><stop offset="0" stop-color="#ffe8f0"/><stop offset="1" stop-color="#e8609a"/></linearGradient><linearGradient id="g_orange" x1="0" x2="1"><stop offset="0" stop-color="#f5c020"/><stop offset="1" stop-color="#e87a20"/></linearGradient><linearGradient id="g_tan" x1="0" x2="1"><stop offset="0" stop-color="#f4e4c0"/><stop offset="1" stop-color="#c09060"/></linearGradient></defs>
<rect x="848.00" y="110.00" width="10.00" height="10.00" fill="#ffffff" stroke="#222" stroke-width="1"/>
<line x1="849.0" y1="119.0" x2="857.0" y2="111" stroke="#d8202a" stroke-width="1.6" />
<rect x="858.42" y="110.00" width="10.00" height="10.00" fill="#e8e8e8" />
<rect x="859.42" y="111.00" width="3.50" height="3.50" fill="#9ab0c8" />
<rect x="863.92" y="111.00" width="3.50" height="3.50" fill="#c8b0b0" />
<rect x="859.42" y="115.50" width="3.50" height="3.50" fill="#b0c8b0" />
<rect x="863.92" y="115.50" width="3.50" height="3.50" fill="#b0b0c8" />
<rect x="868.84" y="110.00" width="10.00" height="10.00" fill="#ffffff" />
<rect x="879.26" y="110.00" width="10.00" height="10.00" fill="#000000" />
<rect x="889.68" y="110.00" width="10.00" height="10.00" fill="#ee1c1c" />
<rect x="900.10" y="110.00" width="10.00" height="10.00" fill="#fcec0c" />
<rect x="910.52" y="110.00" width="10.00" height="10.00" fill="#16e81a" />
<rect x="920.94" y="110.00" width="10.00" height="10.00" fill="#22dcec" />
<rect x="931.36" y="110.00" width="10.00" height="10.00" fill="#1414e0" />
<rect x="941.78" y="110.00" width="10.00" height="10.00" fill="#ec1cec" />
<rect x="952.20" y="110.00" width="10.00" height="10.00" fill="#dc2a2a" />
<rect x="962.62" y="110.00" width="10.00" height="10.00" fill="#ec1c24" />
<rect x="973.04" y="110.00" width="10.00" height="10.00" fill="#f4682a" />
<rect x="983.46" y="110.00" width="10.00" height="10.00" fill="#f79420" />
<rect x="993.88" y="110.00" width="10.00" height="10.00" fill="#fbb040" />
<rect x="848.00" y="120.50" width="10.00" height="10.00" fill="#d5d31d" />
<rect x="858.42" y="120.50" width="10.00" height="10.00" fill="#a6c83c" />
<rect x="868.84" y="120.50" width="10.00" height="10.00" fill="#3db34a" />
<rect x="879.26" y="120.50" width="10.00" height="10.00" fill="#0f9c4c" />
<rect x="889.68" y="120.50" width="10.00" height="10.00" fill="#0b7b3f" />
<rect x="900.10" y="120.50" width="10.00" height="10.00" fill="#19ab8f" />
<rect x="910.52" y="120.50" width="10.00" height="10.00" fill="#12a7bf" />
<rect x="920.94" y="120.50" width="10.00" height="10.00" fill="#2a9fd6" />
<rect x="931.36" y="120.50" width="10.00" height="10.00" fill="#1a82c4" />
<rect x="941.78" y="120.50" width="10.00" height="10.00" fill="#3a3a9c" />
<rect x="952.20" y="120.50" width="10.00" height="10.00" fill="#1c1c66" />
<rect x="962.62" y="120.50" width="10.00" height="10.00" fill="#662d91" />
<rect x="973.04" y="120.50" width="10.00" height="10.00" fill="#93278f" />
<rect x="983.46" y="120.50" width="10.00" height="10.00" fill="#bf1e6e" />
<rect x="993.88" y="120.50" width="10.00" height="10.00" fill="#d4145a" />
<rect x="848.00" y="131.00" width="10.00" height="10.00" fill="#c7b299" />
<rect x="858.42" y="131.00" width="10.00" height="10.00" fill="#a89a8a" />
<rect x="868.84" y="131.00" width="10.00" height="10.00" fill="#8b7b6b" />
<rect x="879.26" y="131.00" width="10.00" height="10.00" fill="#6e5e52" />
<rect x="889.68" y="131.00" width="10.00" height="10.00" fill="#d9a77c" />
<rect x="900.10" y="131.00" width="10.00" height="10.00" fill="#c0936a" />
<rect x="910.52" y="131.00" width="10.00" height="10.00" fill="#9c6d3f" />
<rect x="920.94" y="131.00" width="10.00" height="10.00" fill="#8b5c2c" />
<rect x="931.36" y="131.00" width="10.00" height="10.00" fill="#754c24" />
<rect x="941.78" y="131.00" width="10.00" height="10.00" fill="#5a2e12" />
<rect x="952.20" y="131.00" width="10.00" height="10.00" fill="url(#g_gray)" />
<rect x="962.62" y="131.00" width="10.00" height="10.00" fill="url(#g_blue)" />
<rect x="973.04" y="131.00" width="10.00" height="10.00" fill="url(#g_pink)" />
<rect x="983.46" y="131.00" width="10.00" height="10.00" fill="url(#g_orange)" />
<rect x="993.88" y="131.00" width="10.00" height="10.00" fill="url(#g_tan)" />
<rect x="848.00" y="141.50" width="10.00" height="10.00" fill="#dfe8d8" />
<rect x="849.00" y="143.50" width="1.60" height="1.60" fill="#a0b898" />
<rect x="853.00" y="142.50" width="1.60" height="1.60" fill="#a0b898" />
<rect x="851.00" y="147.50" width="1.60" height="1.60" fill="#a0b898" />
<rect x="855.00" y="146.50" width="1.60" height="1.60" fill="#a0b898" />
<rect x="850.00" y="149.50" width="1.60" height="1.60" fill="#a0b898" />
<rect x="854.00" y="149.50" width="1.60" height="1.60" fill="#a0b898" />
<path d="M849 155.5 H852.5 L853.5 156.5 H858 V162.5 H849 Z" stroke="none" fill="#d0d0d0" stroke-width="1" />
<rect x="858.42" y="152.50" width="10.00" height="10.00" fill="#000000" />
<rect x="868.84" y="152.50" width="10.00" height="10.00" fill="#1a1a1a" />
<rect x="879.26" y="152.50" width="10.00" height="10.00" fill="#333333" />
<rect x="889.68" y="152.50" width="10.00" height="10.00" fill="#4d4d4d" />
<rect x="900.10" y="152.50" width="10.00" height="10.00" fill="#666666" />
<rect x="910.52" y="152.50" width="10.00" height="10.00" fill="#808080" />
<rect x="920.94" y="152.50" width="10.00" height="10.00" fill="#999999" />
<rect x="931.36" y="152.50" width="10.00" height="10.00" fill="#b3b3b3" />
<rect x="941.78" y="152.50" width="10.00" height="10.00" fill="#cccccc" />
<rect x="952.20" y="152.50" width="10.00" height="10.00" fill="#e6e6e6" />
<rect x="962.62" y="152.50" width="10.00" height="10.00" fill="#f2f2f2" />
<path d="M849 167.5 H852.5 L853.5 168.5 H858 V174.5 H849 Z" stroke="none" fill="#d0d0d0" stroke-width="1" />
<rect x="858.42" y="165.00" width="10.00" height="10.00" fill="#3b9fe8" />
<rect x="868.84" y="165.00" width="10.00" height="10.00" fill="#5ebf5a" />
<rect x="879.26" y="165.00" width="10.00" height="10.00" fill="#f39a1f" />
<rect x="889.68" y="165.00" width="10.00" height="10.00" fill="#ee2b2b" />
<rect x="900.10" y="165.00" width="10.00" height="10.00" fill="#f27fb2" />
<rect x="910.52" y="165.00" width="10.00" height="10.00" fill="#c6d6e2" />
<rect x="844.50" y="195.00" width="155.50" height="1.00" fill="#4a4a4a" />
<rect x="946.00" y="200.00" width="9.00" height="8.00" fill="none" stroke="#8a8a8a" stroke-width="1"/>
<path d="M963 200 H967 L968 201 H974 V208 H963 Z" stroke="none" fill="#d8d8d8" stroke-width="1" />
<rect x="984.00" y="200.00" width="8.00" height="8.00" fill="#7a7a7a" />
<rect x="844.50" y="210.00" width="155.50" height="3.00" fill="#3d3d3d" />
<rect x="844.50" y="213.00" width="155.50" height="20.00" fill="#474747" />
<rect x="844.50" y="213.00" width="50.00" height="20.00" fill="#535353" />
<text x="942.00" y="226.50" font-size="9.5" fill="#c4c4c4" font-weight="normal" textLength="34.50" lengthAdjust="spacingAndGlyphs" stroke="#c4c4c4" stroke-width="0.25" >Properties</text>
<rect x="844.50" y="233.00" width="155.50" height="5.00" fill="#535353" />
<rect x="844.50" y="239.50" width="155.50" height="11.30" fill="#4b6890" />
<rect x="844.50" y="250.80" width="155.50" height="4.00" fill="#585858" />
<text x="942.00" y="249.00" font-size="8.5" fill="#d8d8d8" font-weight="normal" stroke="#d8d8d8" stroke-width="0.25" >1</text>
<defs><filter id="sh" x="-10%" y="-10%" width="120%" height="125%"><feGaussianBlur stdDeviation="2.2"/></filter><linearGradient id="frame" x1="0" x2="1" y1="0" y2="0.15"><stop offset="0" stop-color="#c3d8ee"/><stop offset="0.12" stop-color="#d3e4f5"/><stop offset="0.3" stop-color="#c6daef"/><stop offset="0.42" stop-color="#dae8f6"/><stop offset="0.55" stop-color="#bcd1e8"/><stop offset="0.7" stop-color="#d4e4f4"/><stop offset="1" stop-color="#cddff2"/></linearGradient></defs>
<rect x="666.00" y="178.50" width="277.00" height="204.00" fill="#000000" rx="7" opacity="0.45" filter="url(#sh)"/>
<rect x="668.00" y="179.60" width="273.00" height="200.00" fill="#2e363e" rx="5.5"/>
<rect x="669.00" y="180.60" width="269.40" height="198.00" fill="url(#frame)" rx="4.5"/>
<rect x="669.80" y="181.40" width="267.80" height="196.40" fill="none" rx="4" stroke="#e6f0fa" stroke-width="1.2"/>
<text x="675.00" y="195.00" font-size="10.5" fill="#1a1a1a" font-weight="normal" textLength="27.60" lengthAdjust="spacingAndGlyphs" stroke="#1a1a1a" stroke-width="0.25" >Rotate</text>
<rect x="672.80" y="200.80" width="261.20" height="173.60" fill="#aec2d8" />
<rect x="673.50" y="201.30" width="259.80" height="172.40" fill="#454b52" />
<rect x="674.80" y="202.30" width="257.40" height="170.60" fill="#535353" />
<rect x="688.50" y="218.50" width="231.00" height="68.00" fill="none" stroke="#575757" stroke-width="1"/>
<text x="693.00" y="229.00" font-size="9.5" fill="#d8d8d8" font-weight="normal" textLength="26.00" lengthAdjust="spacingAndGlyphs" stroke="#d8d8d8" stroke-width="0.25" >Rotate</text>
<text x="701.00" y="256.00" font-size="9.5" fill="#e0e0e0" font-weight="normal" textLength="26.00" lengthAdjust="spacingAndGlyphs" stroke="#e0e0e0" stroke-width="0.25" >Angle:</text>
<line x1="702" y1="257.8" x2="708" y2="257.8" stroke="#e0e0e0" stroke-width="0.8" />
<circle cx="743" cy="250.2" r="12.5" stroke="#e6e6e6" stroke-width="1.6" fill="none"/>
<line x1="743" y1="250.2" x2="743" y2="238.5" stroke="#e6e6e6" stroke-width="1.4" />
<rect x="761.40" y="245.00" width="45.60" height="12.20" fill="#474747" />
<text x="763.50" y="255.20" font-size="9.5" fill="#f0f0f0" font-weight="normal" textLength="16.50" lengthAdjust="spacingAndGlyphs" stroke="#f0f0f0" stroke-width="0.25" >90°</text>
<text x="693.80" y="281.50" font-size="9.5" fill="#c4c4c4" font-weight="normal" textLength="33.00" lengthAdjust="spacingAndGlyphs" stroke="#c4c4c4" stroke-width="0.25" >Options:</text>
<rect x="730.50" y="273.50" width="8.50" height="8.50" fill="#747474" stroke="#888" stroke-width="0.8"/>
<path d="M732.2 277.8 L734.2 279.8 L737.5 275.3" stroke="#535353" fill="none" stroke-width="1.2" />
<text x="742.00" y="281.50" font-size="9.5" fill="#646464" font-weight="normal" textLength="74.00" lengthAdjust="spacingAndGlyphs" stroke="#646464" stroke-width="0.25" >Transform Objects</text>
<rect x="824.50" y="273.50" width="7.50" height="8.50" fill="none" stroke="#777" stroke-width="0.9"/>
<text x="836.00" y="281.50" font-size="9.5" fill="#646464" font-weight="normal" textLength="78.00" lengthAdjust="spacingAndGlyphs" stroke="#646464" stroke-width="0.25" >Transform Patterns</text>
<rect x="686.80" y="304.00" width="9.00" height="9.00" fill="#e8e8e8" />
<path d="M688.5 308.5 L690.8 311 L694.8 305.8" stroke="#3a3a3a" fill="none" stroke-width="1.4" />
<text x="700.00" y="312.50" font-size="9.5" fill="#f0f0f0" font-weight="normal" textLength="30.70" lengthAdjust="spacingAndGlyphs" stroke="#f0f0f0" stroke-width="0.25" >Preview</text>
<line x1="700.5" y1="314.3" x2="706" y2="314.3" stroke="#e0e0e0" stroke-width="0.8" />
<rect x="685.70" y="331.00" width="69.30" height="19.30" fill="#3f95ea" rx="9.6"/>
<text x="711.00" y="343.80" font-size="9.2" fill="#ffffff" font-weight="bold" textLength="19.70" lengthAdjust="spacingAndGlyphs" >Copy</text>
<line x1="711.5" y1="345.6" x2="717.5" y2="345.6" stroke="#ffffff" stroke-width="0.8" />
<rect x="778.70" y="331.50" width="69.50" height="18.30" fill="none" rx="9.2" stroke="#f2f2f2" stroke-width="2"/>
<text x="807.00" y="343.80" font-size="9.2" fill="#f6f6f6" font-weight="bold" textLength="12.30" lengthAdjust="spacingAndGlyphs" >OK</text>
<rect x="852.60" y="331.50" width="68.40" height="18.30" fill="none" rx="9.2" stroke="#e6e6e6" stroke-width="1.6"/>
<text x="873.00" y="343.80" font-size="9.2" fill="#f2f2f2" font-weight="bold" textLength="26.60" lengthAdjust="spacingAndGlyphs" >Cancel</text></svg>
</body></html>
